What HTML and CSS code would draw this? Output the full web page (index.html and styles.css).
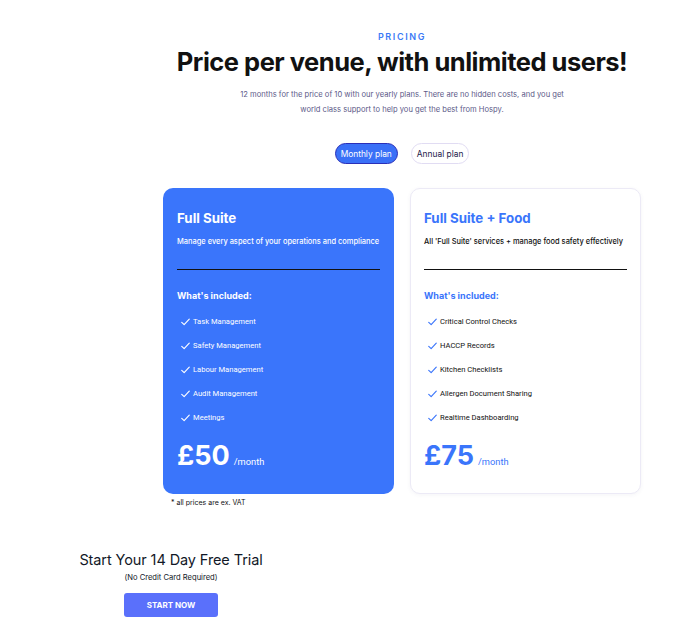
FILE: index.html
```html
<!DOCTYPE html>
<html lang="en">
<head>
<meta charset="utf-8">
<title>Pricing</title>
<link rel="stylesheet" href="styles.css">
</head>
<body>
<main class="page">
  <section class="pricing">
    <header class="intro">
      <p class="eyebrow">PRICING</p>
      <h1 class="title">Price per venue, with unlimited users!</h1>
      <p class="lead">12 months for the price of 10 with our yearly plans. There are no hidden costs, and you get<br>world class support to help you get the best from Hospy.</p>
    </header>
    <div class="toggle">
      <button class="toggle-btn active">Monthly plan</button>
      <button class="toggle-btn">Annual plan</button>
    </div>
    <div class="cards">
      <article class="card card-primary">
        <h2 class="card-title">Full Suite</h2>
        <p class="card-desc">Manage every aspect of your operations and compliance</p>
        <hr class="card-rule">
        <h3 class="included">What's included:</h3>
        <ul class="features">
          <li><svg class="check" viewBox="0 0 12 10"><path d="M1 5.5 L4.2 8.5 L11 1.2" fill="none" stroke="currentColor" stroke-width="1.5" stroke-linecap="round" stroke-linejoin="round"/></svg>Task Management</li>
          <li><svg class="check" viewBox="0 0 12 10"><path d="M1 5.5 L4.2 8.5 L11 1.2" fill="none" stroke="currentColor" stroke-width="1.5" stroke-linecap="round" stroke-linejoin="round"/></svg>Safety Management</li>
          <li><svg class="check" viewBox="0 0 12 10"><path d="M1 5.5 L4.2 8.5 L11 1.2" fill="none" stroke="currentColor" stroke-width="1.5" stroke-linecap="round" stroke-linejoin="round"/></svg>Labour Management</li>
          <li><svg class="check" viewBox="0 0 12 10"><path d="M1 5.5 L4.2 8.5 L11 1.2" fill="none" stroke="currentColor" stroke-width="1.5" stroke-linecap="round" stroke-linejoin="round"/></svg>Audit Management</li>
          <li><svg class="check" viewBox="0 0 12 10"><path d="M1 5.5 L4.2 8.5 L11 1.2" fill="none" stroke="currentColor" stroke-width="1.5" stroke-linecap="round" stroke-linejoin="round"/></svg>Meetings</li>
        </ul>
        <p class="price"><span class="amount">£50</span><span class="per">/month</span></p>
      </article>
      <article class="card card-light">
        <h2 class="card-title">Full Suite + Food</h2>
        <p class="card-desc">All 'Full Suite' services + manage food safety effectively</p>
        <hr class="card-rule">
        <h3 class="included">What's included:</h3>
        <ul class="features">
          <li><svg class="check" viewBox="0 0 12 10"><path d="M1 5.5 L4.2 8.5 L11 1.2" fill="none" stroke="currentColor" stroke-width="1.5" stroke-linecap="round" stroke-linejoin="round"/></svg>Critical Control Checks</li>
          <li><svg class="check" viewBox="0 0 12 10"><path d="M1 5.5 L4.2 8.5 L11 1.2" fill="none" stroke="currentColor" stroke-width="1.5" stroke-linecap="round" stroke-linejoin="round"/></svg>HACCP Records</li>
          <li><svg class="check" viewBox="0 0 12 10"><path d="M1 5.5 L4.2 8.5 L11 1.2" fill="none" stroke="currentColor" stroke-width="1.5" stroke-linecap="round" stroke-linejoin="round"/></svg>Kitchen Checklists</li>
          <li><svg class="check" viewBox="0 0 12 10"><path d="M1 5.5 L4.2 8.5 L11 1.2" fill="none" stroke="currentColor" stroke-width="1.5" stroke-linecap="round" stroke-linejoin="round"/></svg>Allergen Document Sharing</li>
          <li><svg class="check" viewBox="0 0 12 10"><path d="M1 5.5 L4.2 8.5 L11 1.2" fill="none" stroke="currentColor" stroke-width="1.5" stroke-linecap="round" stroke-linejoin="round"/></svg>Realtime Dashboarding</li>
        </ul>
        <p class="price"><span class="amount">£75</span><span class="per">/month</span></p>
      </article>
    </div>
    <p class="vat">* all prices are ex. VAT</p>
  </section>
  <section class="trial">
    <h2 class="trial-title">Start Your 14 Day Free Trial</h2>
    <p class="trial-note">(No Credit Card Required)</p>
    <button class="trial-btn">START NOW</button>
  </section>
</main>
</body>
</html>
```

FILE: styles.css
```css
* { box-sizing: border-box; }
html, body { margin: 0; padding: 0; background: #ffffff; }
body {
  font-family: Inter, "Noto Sans", Arial, sans-serif;
  color: #111827;
  width: 691px;
  height: 631px;
  overflow: hidden;
}
.page { padding-top: 31px; }
.pricing {
  width: 478px;
  margin-left: 163px;
}
.intro { text-align: center; }
.eyebrow {
  margin: 0;
  font-size: 9px;
  line-height: 12px;
  font-weight: 600;
  letter-spacing: 1.6px;
  color: #3b7af6;
}
.title {
  margin: 2px -20px 0;
  font-size: 25.5px;
  line-height: 34px;
  font-weight: 700;
  letter-spacing: -0.5px;
  white-space: nowrap;
  color: #111111;
}
.lead {
  margin: 8px 0 0;
  font-size: 7.6px;
  line-height: 15px;
  color: #5d5a88;
}
.toggle {
  display: flex;
  justify-content: center;
  gap: 13px;
  margin-top: 26px;
}
.toggle-btn {
  font-family: Inter, "Noto Sans", Arial, sans-serif;
  font-size: 8.4px;
  height: 21px;
  padding: 0 5px;
  border-radius: 11px;
  border: 1px solid #e1dcf3;
  background: #ffffff;
  color: #1d1a4a;
}
.toggle-btn.active {
  background: #3a70f7;
  border-color: #2a2fb8;
  color: #ffffff;
}
.cards {
  display: grid;
  grid-template-columns: 231px 231px;
  gap: 16px;
  margin-top: 24px;
}
.card {
  height: 306px;
  border-radius: 10px;
  padding: 22px 14px 0;
}
.card-primary { background: #3a75fb; color: #ffffff; }
.card-light {
  padding: 21px 13px 0;
  background: #ffffff;
  border: 1px solid #eceaf6;
  box-shadow: 0 1px 4px rgba(60, 60, 120, 0.06);
  color: #111111;
}
.card-title {
  margin: 0;
  font-size: 13.3px;
  line-height: 16px;
  font-weight: 700;
}
.card-light .card-title { color: #3a75fb; }
.card-desc {
  margin: 11px 0 0;
  font-size: 7.45px;
  line-height: 10px;
  font-weight: 500;
}
.card-rule {
  margin: 22px 0 0;
  border: 0;
  border-top: 1px solid #111111;
  height: 0;
}
.included {
  margin: 20px 0 0;
  font-size: 9px;
  line-height: 12px;
  font-weight: 700;
}
.card-light .included { color: #3a75fb; }
.features {
  list-style: none;
  margin: 7px 0 0;
  padding: 0 0 0 4px;
  font-family: Roboto, Inter, Arial, sans-serif;
}
.features li {
  display: flex;
  align-items: center;
  height: 24px;
  font-size: 7.6px;
}
.check {
  width: 9px;
  height: 8px;
  margin-right: 3px;
  margin-top: 2px;
  color: #ffffff;
}
.card-light .check { color: #3a75fb; }
.price {
  margin: 10px 0 0;
  display: flex;
  align-items: baseline;
  gap: 4px;
}
.amount {
  font-size: 27px;
  line-height: 34px;
  font-weight: 700;
}
.per {
  font-family: Roboto, Inter, Arial, sans-serif;
  font-size: 9.3px;
}
.card-light .price { color: #3a75fb; }
.vat {
  margin: 4px 0 0 8px;
  font-size: 7px;
  line-height: 10px;
  color: #111111;
}
.trial {
  width: 342px;
  text-align: center;
  margin-top: 42px;
}
.trial-title {
  margin: 0;
  font-size: 14.5px;
  line-height: 20px;
  font-weight: 400;
  letter-spacing: -0.1px;
  color: #111827;
}
.trial-note {
  margin: 3px 0 0;
  font-size: 7.6px;
  line-height: 10px;
}
.trial-btn {
  margin-top: 10px;
  width: 94px;
  height: 24px;
  border: 0;
  border-radius: 3px;
  background: #5a70fb;
  color: #ffffff;
  font-family: Inter, Arial, sans-serif;
  font-size: 8px;
  font-weight: 700;
}
```
